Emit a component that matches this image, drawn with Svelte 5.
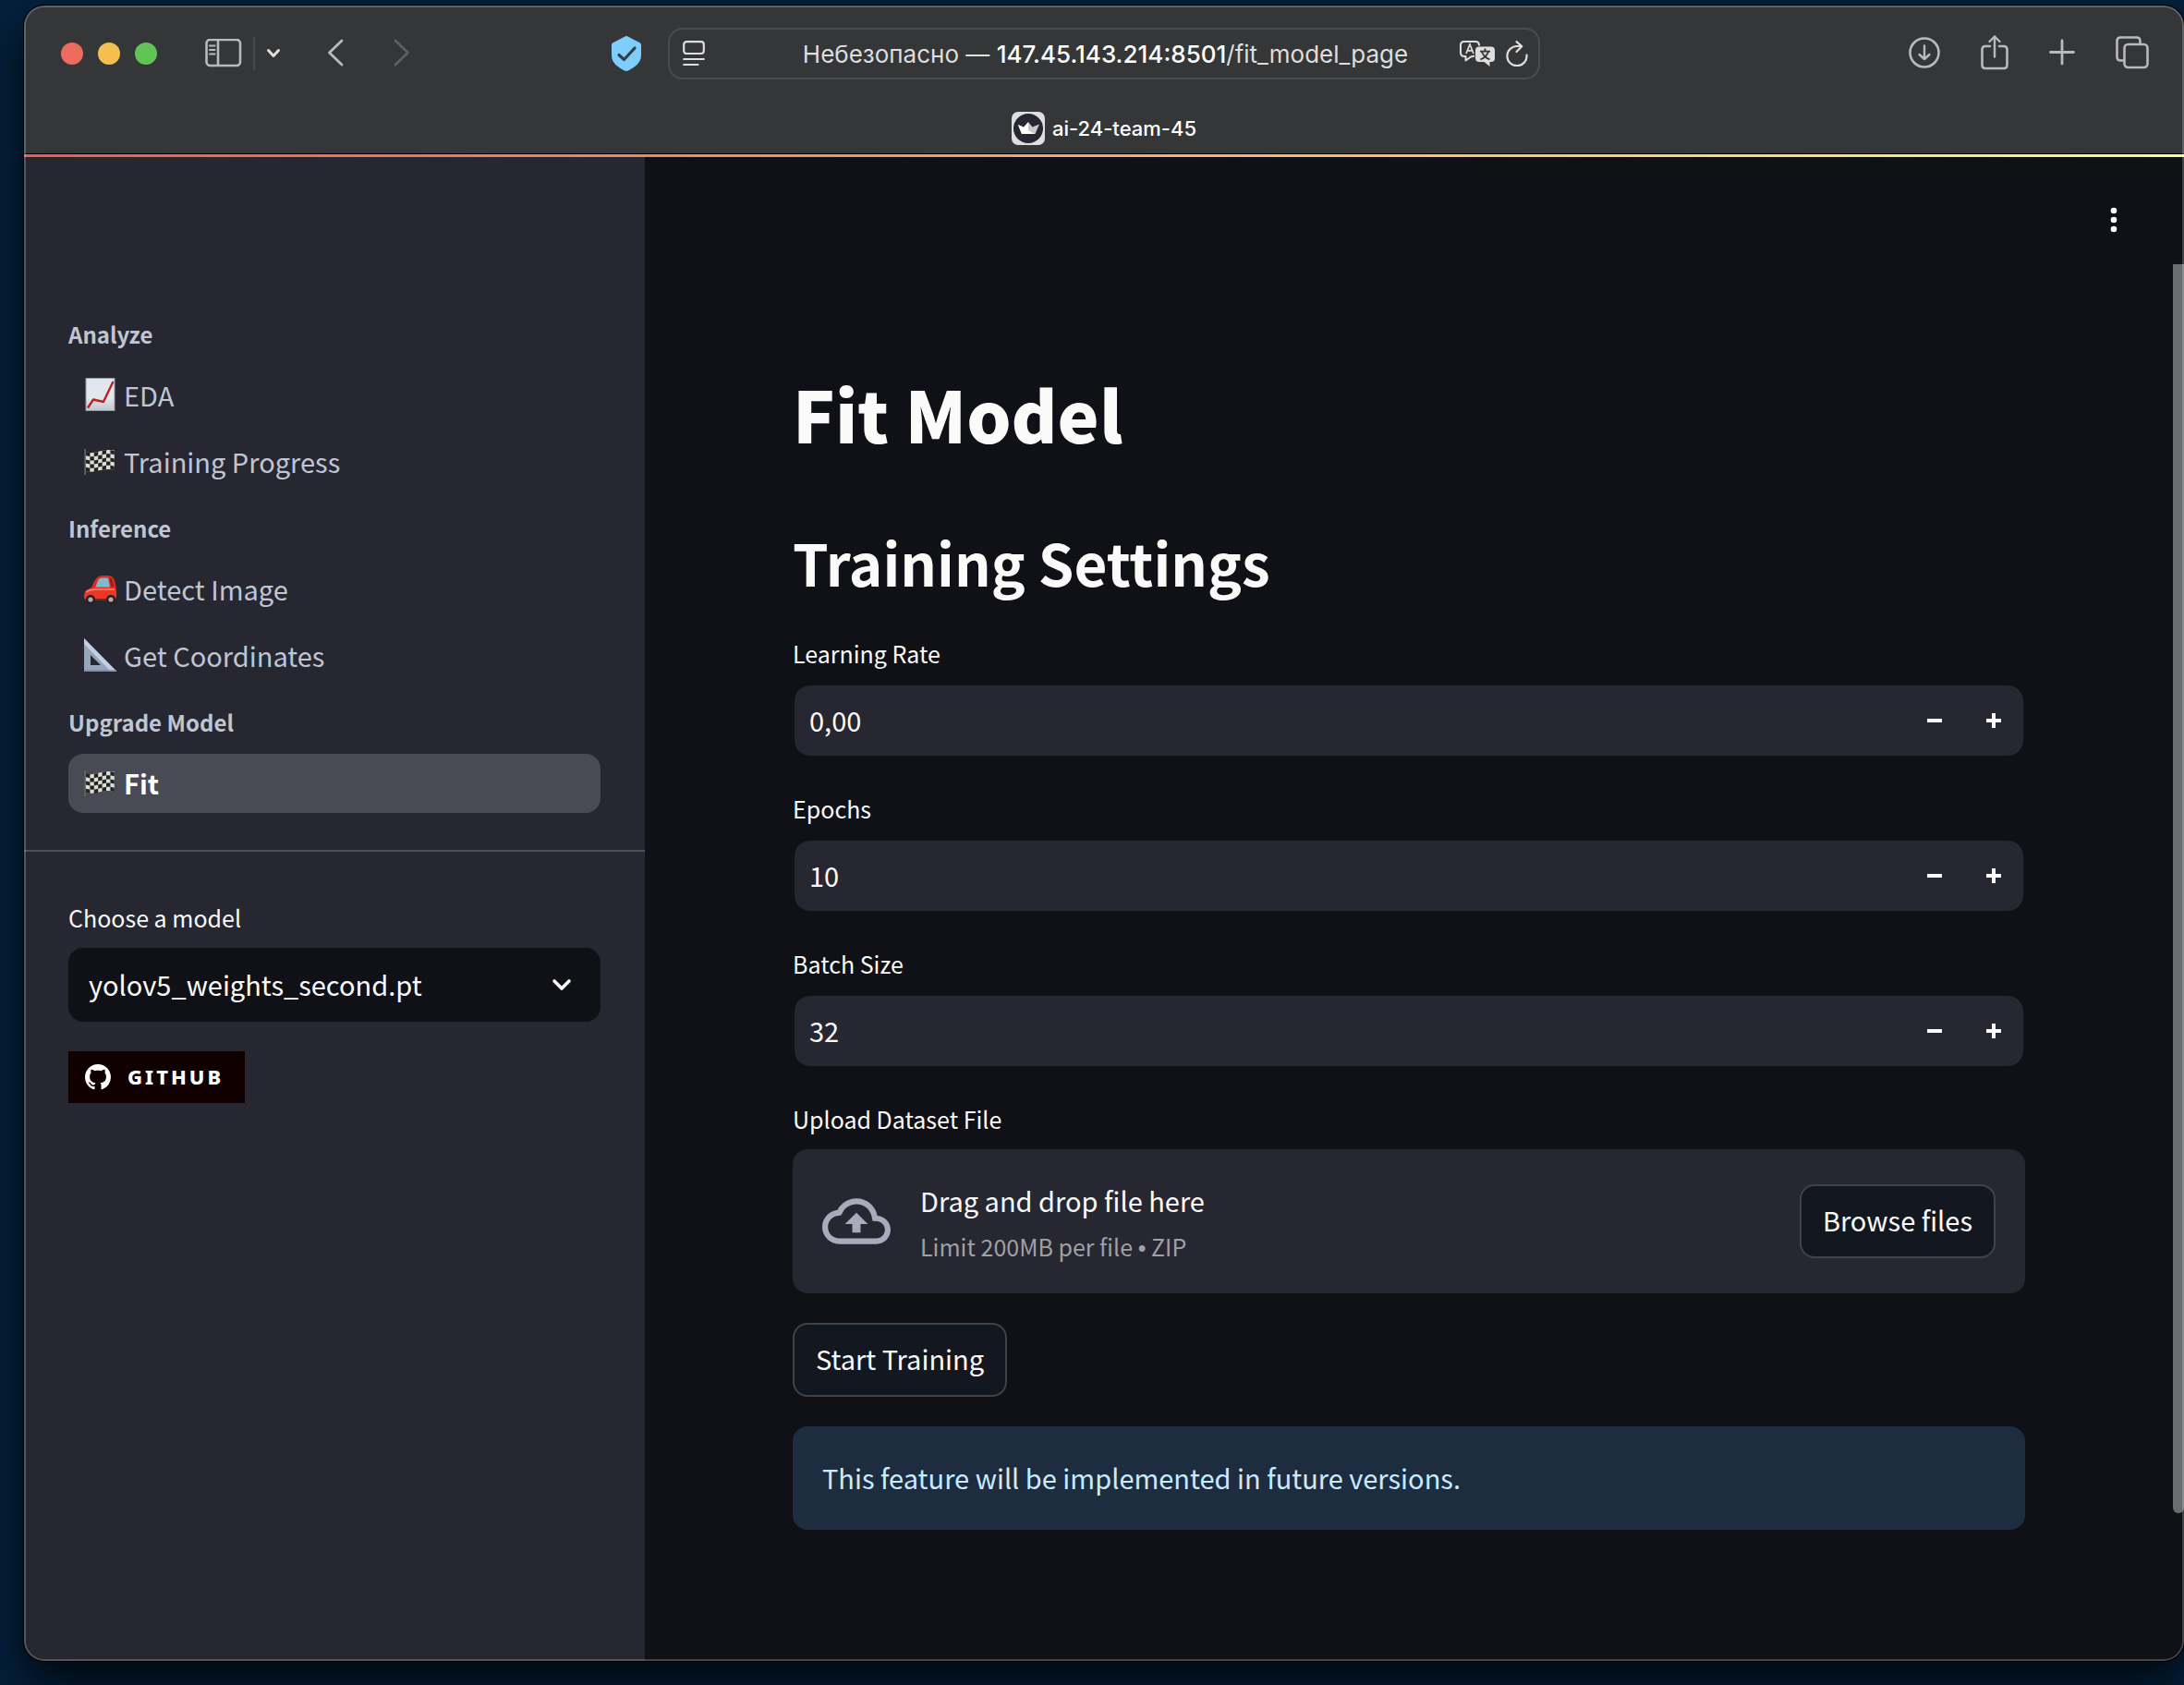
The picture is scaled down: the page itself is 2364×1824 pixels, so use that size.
<script>
  const groups = [
    {
      title: 'Analyze',
      items: [
        { icon: 'chart', text: 'EDA' },
        { icon: 'flag', text: 'Training Progress' }
      ]
    },
    {
      title: 'Inference',
      items: [
        { icon: 'car', text: 'Detect Image' },
        { icon: 'ruler', text: 'Get Coordinates' }
      ]
    },
    { title: 'Upgrade Model', items: [{ icon: 'flag', text: 'Fit', active: true }] }
  ];

  let fields = $state([
    { id: 'learning-rate', label: 'Learning Rate', value: 0, step: 0.01, digits: 2 },
    { id: 'epochs', label: 'Epochs', value: 10, step: 1, digits: 0 },
    { id: 'batch-size', label: 'Batch Size', value: 32, step: 1, digits: 0 }
  ]);

  let fileInput;

  const format = (f) => f.value.toFixed(f.digits).replace('.', ',');
  const bump = (f, dir) => (f.value = Math.max(0, f.value + dir * f.step));

  // Dark squares of the waving checkered flag
  const checks = [];
  for (let r = 0; r < 5; r++) {
    for (let c = 0; c < 7; c++) {
      if ((r + c) % 2 === 0) {
        const wave = [2, 3, 3, 2, 1, 0, 0, 1];
        const x = 3 + c * 4.4;
        const y1 = 6 + wave[c] + r * 4.2;
        const y2 = 6 + wave[c + 1] + r * 4.2;
        checks.push(`M${x} ${y1}L${x + 4.4} ${y2}V${y2 + 4.2}L${x} ${y1 + 4.2}Z`);
      }
    }
  }
  const checkPath = checks.join('');
</script>

{#snippet emoji(name)}
  <svg class="emoji" viewBox="0 0 36 36" aria-hidden="true">
    {#if name === 'chart'}
      <defs>
        <linearGradient id="paper" x1="0" y1="0" x2="0" y2="1">
          <stop offset="0" stop-color="#dfe6f1" />
          <stop offset="0.6" stop-color="#e3e7ec" />
          <stop offset="1" stop-color="#c3c9cc" />
        </linearGradient>
      </defs>
      <rect x="2.5" y="0" width="32" height="36" fill="#8f99a4" />
      <rect x="3.5" y="1" width="30" height="34" fill="url(#paper)" />
      <path d="M5 32.5L11 23.5L22 26L32.5 4" fill="none" stroke="#b5241f" stroke-width="2.4" stroke-linejoin="round" />
    {:else if name === 'flag'}
      <path d="M2.2 5V33" stroke="#66686c" stroke-width="1.6" />
      <path d="M3 8C12 12 20 4 33.8 6.5V27.5C20 25 12 32 3 29Z" fill="#dcdcd8" />
      <path d={checkPath} fill="#23231f" />
    {:else if name === 'car'}
      <path d="M9 18C11 10 15 4 21 4H27Q33 4 34.5 11L36 19H8Z" fill="#d92b20" />
      <path d="M13 17L16.5 8.5Q17.5 6.5 21 6.5H27L29 17Z" fill="#82b9cc" />
      <path d="M28.5 6.500H30Q32.500 9 33 17H30.500Z" fill="#9c1d16" />
      <path d="M1 27C1 20 5 18 12 16.5H32Q36 17 36 22V27Q35 31 31 31H4Q1 31 1 27Z" fill="#ec3626" />
      <path d="M3 22Q8 18.5 17 19H34" fill="none" stroke="#ff8271" stroke-width="1.4" />
      <path d="M2 30H34" stroke="#98170f" stroke-width="2" />
      <circle cx="8" cy="30" r="5" fill="#25201f" />
      <circle cx="30" cy="30" r="5" fill="#25201f" />
      <circle cx="8" cy="30" r="2.6" fill="#b1adad" />
      <circle cx="30" cy="30" r="2.6" fill="#b1adad" />
    {:else}
      <path d="M1 0L36.5 36H1ZM8 18V29H19Z" fill="#96a5b9" fill-rule="evenodd" />
      <path d="M1 0L36.5 36H30L1 6Z" fill="#c2d0e2" />
      <path d="M1 35H36" stroke="#7c899b" stroke-width="1.5" />
    {/if}
  </svg>
{/snippet}

<div class="desktop">
  <div class="window">
    <header class="chrome">
      <div class="toolbar">
        <div class="side left">
          <div class="lights">
            <button class="light red" aria-label="Close"></button>
            <button class="light yellow" aria-label="Minimize"></button>
            <button class="light green" aria-label="Full screen"></button>
          </div>
          <button class="icon panel" aria-label="Sidebar">
            <svg width="40" height="32" viewBox="0 0 40 32">
              <g fill="none" stroke="#b9babb" stroke-width="2.6">
                <rect x="1.5" y="1" width="36.5" height="28" rx="4" />
                <path d="M14 1V29" />
                <path d="M5 7.5H10.5M5 12H10.5M5 16.5H10.5" stroke-width="2" stroke-linecap="round" />
              </g>
            </svg>
          </button>
          <span class="rule"></span>
          <button class="icon drop" aria-label="Tab groups">
            <svg width="16" height="12" viewBox="0 0 16 12"><path d="M2.5 2.5L8 8.5L13.5 2.5" fill="none" stroke="#dedede" stroke-width="3" stroke-linecap="round" stroke-linejoin="round" /></svg>
          </button>
          <button class="icon back" aria-label="Back">
            <svg width="18" height="32" viewBox="0 0 18 32"><path d="M16 2L2.5 15L16 28" fill="none" stroke="#b9babb" stroke-width="2.8" stroke-linecap="round" stroke-linejoin="round" /></svg>
          </button>
          <button class="icon forward" aria-label="Forward">
            <svg width="18" height="32" viewBox="0 0 18 32"><path d="M2 2L15.5 15L2 28" fill="none" stroke="#5e5f61" stroke-width="2.8" stroke-linecap="round" stroke-linejoin="round" /></svg>
          </button>
          <button class="icon shield" aria-label="Privacy">
            <svg width="32" height="38" viewBox="0 0 32 38">
              <path d="M16 0Q17 0 18 .8L30.500 7.200Q32 8 32 9.500V21C32 29 25 34 18 37.500Q16 38.400 14 37.500C7 34 0 29 0 21V9.500Q0 8 1.500 7.200L14 .8Q15 0 16 0Z" fill="#7fcdfd" />
              <path d="M8 20.500L13.500 25.500L25 13" fill="none" stroke="#333f48" stroke-width="3.2" stroke-linecap="round" stroke-linejoin="round" />
            </svg>
          </button>
        </div>

        <div class="address">
          <button class="icon" aria-label="Reader">
            <svg width="24" height="28" viewBox="0 0 24 28">
              <g fill="none" stroke="#dededf" stroke-width="2.200" stroke-linecap="round">
                <rect x="1.200" y="1.200" width="21.600" height="12.800" rx="3" />
                <path d="M1.200 20H22.800M1.200 26H16.500" />
              </g>
            </svg>
          </button>
          <button class="url">Небезопасно — <span>147.45.143.214:8501</span>/fit_model_page</button>
          <div class="tools">
            <button class="icon" aria-label="Translate">
              <svg width="38" height="28" viewBox="0 0 38 28">
                <path d="M16 16.500L12 17.500L6.500 21.500V17H5Q1 17 1 13V5Q1 1 5 1H17Q21 1 21 5V5.500" fill="none" stroke="#dededf" stroke-width="2" stroke-linejoin="round" />
                <path d="M7 14L11 4L15 14M8.500 10.800H13.500" fill="none" stroke="#dededf" stroke-width="1.700" />
                <path d="M21 6.500H34Q38 6.500 38 10.500V19Q38 23 34 23H32.500V28L26.500 23H21Q17 23 17 19V10.500Q17 6.500 21 6.500Z" fill="#dededf" />
                <path d="M27.500 8.500V11.500M22 11.700H33M24 12Q26 18 32.500 20.300M31 12Q29 18 22.500 20.300" fill="none" stroke="#353638" stroke-width="1.800" />
              </svg>
            </button>
            <button class="icon" aria-label="Reload">
              <svg width="24" height="28" viewBox="0 0 24 28">
                <path d="M22.500 15.500A10.600 10.600 0 1 1 12 6H17M11.500 1.200L17.200 6.200L11.500 12" fill="none" stroke="#dededf" stroke-width="2.200" stroke-linecap="round" stroke-linejoin="round" />
              </svg>
            </button>
          </div>
        </div>

        <div class="side right">
          <button class="icon" aria-label="Downloads">
            <svg width="36" height="40" viewBox="0 0 36 40">
              <g fill="none" stroke="#b9babb" stroke-width="2.600" stroke-linecap="round" stroke-linejoin="round">
                <circle cx="19" cy="19" r="15.500" />
                <path d="M19 11.500V26M13.500 21L19 26L24.500 21" stroke-width="2.400" />
              </g>
            </svg>
          </button>
          <button class="icon" aria-label="Share">
            <svg width="30" height="40" viewBox="0 0 30 40">
              <g fill="none" stroke="#b9babb" stroke-width="2.600" stroke-linecap="round" stroke-linejoin="round">
                <path d="M10 12H5Q1.500 12 1.500 15.500V32.500Q1.500 36 5 36H25Q28.500 36 28.500 32.500V15.500Q28.500 12 25 12H20" />
                <path d="M15 23.500V1.500M9.500 7L15 1.500L20.500 7" stroke-width="2.400" />
              </g>
            </svg>
          </button>
          <button class="icon" aria-label="New tab">
            <svg width="28" height="40" viewBox="0 0 28 40"><path d="M14 6V31M1.500 18.500H26.500" stroke="#b9babb" stroke-width="2.800" stroke-linecap="round" /></svg>
          </button>
          <button class="icon" aria-label="Tab overview">
            <svg width="36" height="40" viewBox="0 0 36 40">
              <g fill="none" stroke="#b9babb" stroke-width="2.600">
                <rect x="9.500" y="10" width="25" height="25" rx="4" />
                <path d="M9 27.500H5.500Q1.500 27.500 1.500 23.500V6.500Q1.500 2.500 5.500 2.500H22.500Q26.500 2.500 26.500 6.500V9.500" />
              </g>
            </svg>
          </button>
        </div>
      </div>

      <div class="tab">
        <svg width="36" height="36" viewBox="0 0 36 36" aria-hidden="true">
          <rect width="36" height="36" rx="7" fill="#dedede" />
          <circle cx="18" cy="18" r="16" fill="#262730" />
          <path d="M7 14L13 16.500L18 11V24H11Z" fill="#fff" />
          <path d="M18 11L22.500 16.500L30 13.500L25.500 24H18Z" fill="#c9c9cb" />
          <path d="M7 14L25 24H11Z" fill="#fff" />
        </svg>
        <span>ai-24-team-45</span>
      </div>
    </header>

    <div class="decoration"></div>

    <div class="app">
      <aside>
        <nav>
          {#each groups as group}
            <h3>{group.title}</h3>
            <ul>
              {#each group.items as item}
                <li>
                  <a href="#{item.text}" class:active={item.active} aria-current={item.active ? 'page' : undefined}>
                    {@render emoji(item.icon)}
                    <span>{item.text}</span>
                  </a>
                </li>
              {/each}
            </ul>
          {/each}
        </nav>
        <div class="model">
          <label for="model">Choose a model</label>
          <div class="select">
            <select id="model">
              <option>yolov5_weights_second.pt</option>
            </select>
            <svg class="caret" width="24" height="16" viewBox="0 0 24 16" aria-hidden="true"><path d="M4 4L12 12L20 4" fill="none" stroke="#fafafa" stroke-width="3.600" stroke-linecap="round" stroke-linejoin="round" /></svg>
          </div>
          <a class="badge" href="#github">
            <svg width="28" height="28" viewBox="0 0 16 16" aria-hidden="true"><path fill="#fff" d="M8 0C3.580 0 0 3.580 0 8c0 3.540 2.290 6.530 5.470 7.590.4.070.55-.17.55-.38 0-.19-.01-.82-.01-1.490-2.010.37-2.530-.49-2.690-.94-.09-.23-.48-.94-.82-1.130-.28-.15-.68-.52-.01-.53.63-.01 1.080.58 1.230.82.72 1.210 1.870.87 2.330.66.07-.52.28-.87.51-1.070-1.780-.2-3.640-.89-3.640-3.950 0-.87.31-1.590.82-2.150-.08-.2-.36-1.020.08-2.120 0 0 .67-.21 2.200.82.64-.18 1.320-.27 2-.27s1.360.09 2 .27c1.530-1.040 2.200-.82 2.200-.82.44 1.100.16 1.920.08 2.120.51.56.82 1.270.82 2.150 0 3.070-1.870 3.750-3.650 3.950.29.25.54.73.54 1.480 0 1.070-.01 1.930-.01 2.200 0 .21.15.46.55.38A8.010 8.010 0 0 0 16 8c0-4.420-3.580-8-8-8z" /></svg>
            <span>GITHUB</span>
          </a>
        </div>
      </aside>

      <main>
        <button class="kebab" aria-label="Main menu">
          <svg width="8" height="28" viewBox="0 0 8 28"><g fill="#fff"><circle cx="4" cy="4" r="3.300" /><circle cx="4" cy="14" r="3.300" /><circle cx="4" cy="24" r="3.300" /></g></svg>
        </button>
        <h1>Fit Model</h1>
        <h2>Training Settings</h2>
        <div class="form">
          {#each fields as f}
            <div class="field">
              <label for={f.id}>{f.label}</label>
              <div class="number">
                <input id={f.id} type="text" inputmode="decimal" value={format(f)} />
                <button aria-label="Decrease {f.label}" onclick={() => bump(f, -1)}>
                  <svg width="16" height="16" viewBox="0 0 16 16"><path d="M0 6H16V10H0Z" fill="#fafafa" /></svg>
                </button>
                <button aria-label="Increase {f.label}" onclick={() => bump(f, 1)}>
                  <svg width="16" height="16" viewBox="0 0 16 16"><path d="M6 0H10V6H16V10H10V16H6V10H0V6H6Z" fill="#fafafa" /></svg>
                </button>
              </div>
            </div>
          {/each}

          <div class="field">
            <label for="dataset">Upload Dataset File</label>
            <section class="drop-zone">
              <svg width="74" height="74" viewBox="0 0 24 24" aria-hidden="true"><path fill="#a9abbd" d="M19.350 10.040C18.670 6.590 15.640 4 12 4 9.110 4 6.600 5.640 5.350 8.040 2.340 8.360 0 10.910 0 14c0 3.310 2.690 6 6 6h13c2.760 0 5-2.240 5-5 0-2.640-2.050-4.780-4.650-4.960zM19 18H6c-2.210 0-4-1.790-4-4 0-2.050 1.530-3.760 3.560-3.970l1.070-.11.5-.95C8.080 7.140 9.940 6 12 6c2.620 0 4.880 1.860 5.390 4.430l.3 1.500 1.530.11c1.560.1 2.780 1.410 2.780 2.960 0 1.650-1.350 3-3 3zM8 13h2.550v3h2.900v-3H16l-4-4z" /></svg>
              <div class="hint">
                <span>Drag and drop file here</span>
                <small>Limit 200MB per file <span class="dot">•</span> ZIP</small>
              </div>
              <input bind:this={fileInput} id="dataset" type="file" accept=".zip" hidden />
              <button class="btn" onclick={() => fileInput.click()}>Browse files</button>
            </section>
          </div>

          <button class="btn">Start Training</button>
          <div class="info" role="status">This feature will be implemented in future versions.</div>
        </div>
      </main>
      <div class="scrollbar"><div class="thumb"></div></div>
    </div>
  </div>
</div>

<style>
  :global(body) {
    background: #04203b;
  }

  * {
    box-sizing: border-box;
  }

  button,
  input,
  select {
    margin: 0;
    padding: 0;
    border: 0;
    background: none;
    color: inherit;
    font: inherit;
  }

  svg {
    display: block;
    flex: none;
  }

  .desktop {
    display: flex;
    min-height: 100vh;
    padding: 6px 0 26px 26px;
    overflow: hidden;
    font-family: 'Noto Sans CJK SC', 'Noto Sans', sans-serif;
    font-size: 29px;
    line-height: 46px;
    color: #fafafa;
  }

  .window {
    position: relative;
    display: flex;
    flex: 1;
    flex-direction: column;
    min-width: 0;
    border-radius: 22px;
    background: #0f1116;
    box-shadow:
      0 0 0 1px #000,
      0 24px 50px rgba(0, 0, 0, 0.75);
    overflow: hidden;
  }

  .window::after {
    content: '';
    position: absolute;
    inset: 0;
    border: 2px solid rgba(255, 255, 255, 0.22);
    border-radius: 22px;
    pointer-events: none;
  }

  /* Browser chrome */
  .chrome {
    background: #353638;
    font-family: Inter, sans-serif;
  }

  .toolbar {
    display: grid;
    grid-template-columns: 1fr minmax(0, 944px) 1fr;
    align-items: center;
    height: 104px;
  }

  .side {
    display: flex;
    align-items: center;
  }

  .left {
    padding: 0 29px 0 40px;
  }

  .right {
    justify-content: flex-end;
    gap: 44px;
    padding-right: 38px;
  }

  .lights {
    display: flex;
    gap: 16px;
  }

  .light {
    width: 24px;
    height: 24px;
    border-radius: 50%;
  }

  .red {
    background: #ed6a5f;
  }

  .yellow {
    background: #f5bf4f;
  }

  .green {
    background: #61c555;
  }

  .panel {
    margin-left: 52px;
  }

  .rule {
    width: 2px;
    height: 36px;
    margin: 0 12px;
    background: #48494b;
  }

  .back {
    margin-left: 50px;
  }

  .forward {
    margin-left: 54px;
  }

  .shield {
    margin-left: auto;
  }

  .address {
    display: grid;
    grid-template-columns: 1fr auto 1fr;
    align-items: center;
    height: 56px;
    padding: 0 11px 0 14px;
    border: 2px solid #4b4c4e;
    border-radius: 16px;
  }

  .address > .icon {
    justify-self: start;
  }

  .url {
    padding-top: 2px;
    color: #dededf;
    font-size: 26px;
    line-height: 32px;
    white-space: nowrap;
  }

  .url span {
    color: #fff;
    font-weight: 500;
  }

  .tools {
    display: flex;
    align-items: center;
    justify-self: end;
    gap: 12px;
  }

  .tab {
    display: flex;
    align-items: center;
    justify-content: center;
    gap: 8px;
    height: 56px;
    padding-top: 2px;
    color: #fff;
    font-size: 22px;
    font-weight: 500;
    line-height: 28px;
  }

  .decoration {
    height: 4px;
    border-top: 1px solid #000;
    background: linear-gradient(90deg, #f05a58, #fbfb88);
  }

  /* Page */
  .app {
    display: flex;
    flex: 1;
  }

  aside {
    width: 672px;
    flex: none;
    background: #262730;
  }

  nav {
    padding: 152px 48px 40px;
    border-bottom: 2px solid #4f5057;
  }

  h3 {
    margin: 0;
    padding: 19px 0 13px;
    color: #bfc5d3;
    font-size: 24px;
    font-weight: 700;
    line-height: 42px;
  }

  ul {
    display: flex;
    flex-direction: column;
    gap: 8px;
    margin: 0;
    padding: 0;
    list-style: none;
  }

  nav a {
    display: flex;
    align-items: center;
    gap: 8px;
    height: 64px;
    padding: 0 16px 2px;
    border-radius: 16px;
    color: #bfc5d3;
    text-decoration: none;
  }

  nav a.active {
    background: #494b54;
    color: #fff;
    font-weight: 700;
  }

  .emoji {
    width: 36px;
    height: 36px;
  }

  .model {
    display: flex;
    flex-direction: column;
    align-items: flex-start;
    padding: 48px 48px 0;
  }

  label {
    display: block;
    margin-bottom: 10px;
    font-size: 25px;
    line-height: 46px;
  }

  .select {
    position: relative;
    width: 100%;
    margin-bottom: 32px;
  }

  select {
    display: block;
    width: 100%;
    height: 80px;
    padding: 0 64px 2px 22px;
    border-radius: 16px;
    background: #0f1116;
    appearance: none;
  }

  .caret {
    position: absolute;
    top: 32px;
    right: 30px;
    pointer-events: none;
  }

  .badge {
    display: flex;
    align-items: center;
    gap: 18px;
    height: 56px;
    padding: 0 23px 0 18px;
    background: #100000;
    color: #fff;
    font-family: 'Noto Sans', sans-serif;
    font-size: 22px;
    font-weight: 800;
    letter-spacing: 3px;
    text-decoration: none;
  }

  .badge span {
    padding-bottom: 2px;
  }

  main {
    position: relative;
    flex: 1;
    min-width: 0;
    padding: 223px 160px 142px;
  }

  .kebab {
    position: absolute;
    top: 54px;
    right: 60px;
  }

  h1 {
    margin: 0 0 64px;
    font-size: 76px;
    font-weight: 900;
    line-height: 108px;
  }

  h2 {
    margin: 0 0 33px;
    font-size: 62px;
    font-weight: 700;
    line-height: 86px;
  }

  .form {
    display: flex;
    flex-direction: column;
    align-items: flex-start;
    gap: 32px;
  }

  .field {
    width: 100%;
  }

  .number {
    display: flex;
    height: 80px;
    border: 2px solid #0f1116;
    border-radius: 18px;
    background: #262730;
    background-clip: padding-box;
  }

  .number input {
    flex: 1;
    min-width: 0;
    padding: 0 16px 2px;
  }

  .number button {
    display: flex;
    align-items: center;
    justify-content: center;
    width: 64px;
  }

  .drop-zone {
    display: flex;
    align-items: center;
    gap: 32px;
    height: 156px;
    padding: 0 32px;
    border-radius: 16px;
    background: #262730;
  }

  .hint {
    display: flex;
    flex: 1;
    flex-direction: column;
    gap: 4px;
    padding-top: 5px;
  }

  small {
    color: #a0a0a5;
    font-size: 25px;
  }

  .dot {
    font-family: 'Liberation Sans', sans-serif;
  }

  .btn {
    height: 80px;
    padding: 0 23px 4px;
    border: 2px solid #41434a;
    border-radius: 16px;
    background: #131720;
    white-space: nowrap;
  }

  .info {
    width: 100%;
    padding: 32px 32px 34px;
    border-radius: 16px;
    background: #1e2c3f;
    color: #c7ebff;
  }

  .scrollbar {
    display: flex;
    width: 12px;
    padding: 116px 0 160px;
  }

  .thumb {
    flex: 1;
    border-radius: 0 0 6px 6px;
    background: #6b6c70;
  }
</style>
